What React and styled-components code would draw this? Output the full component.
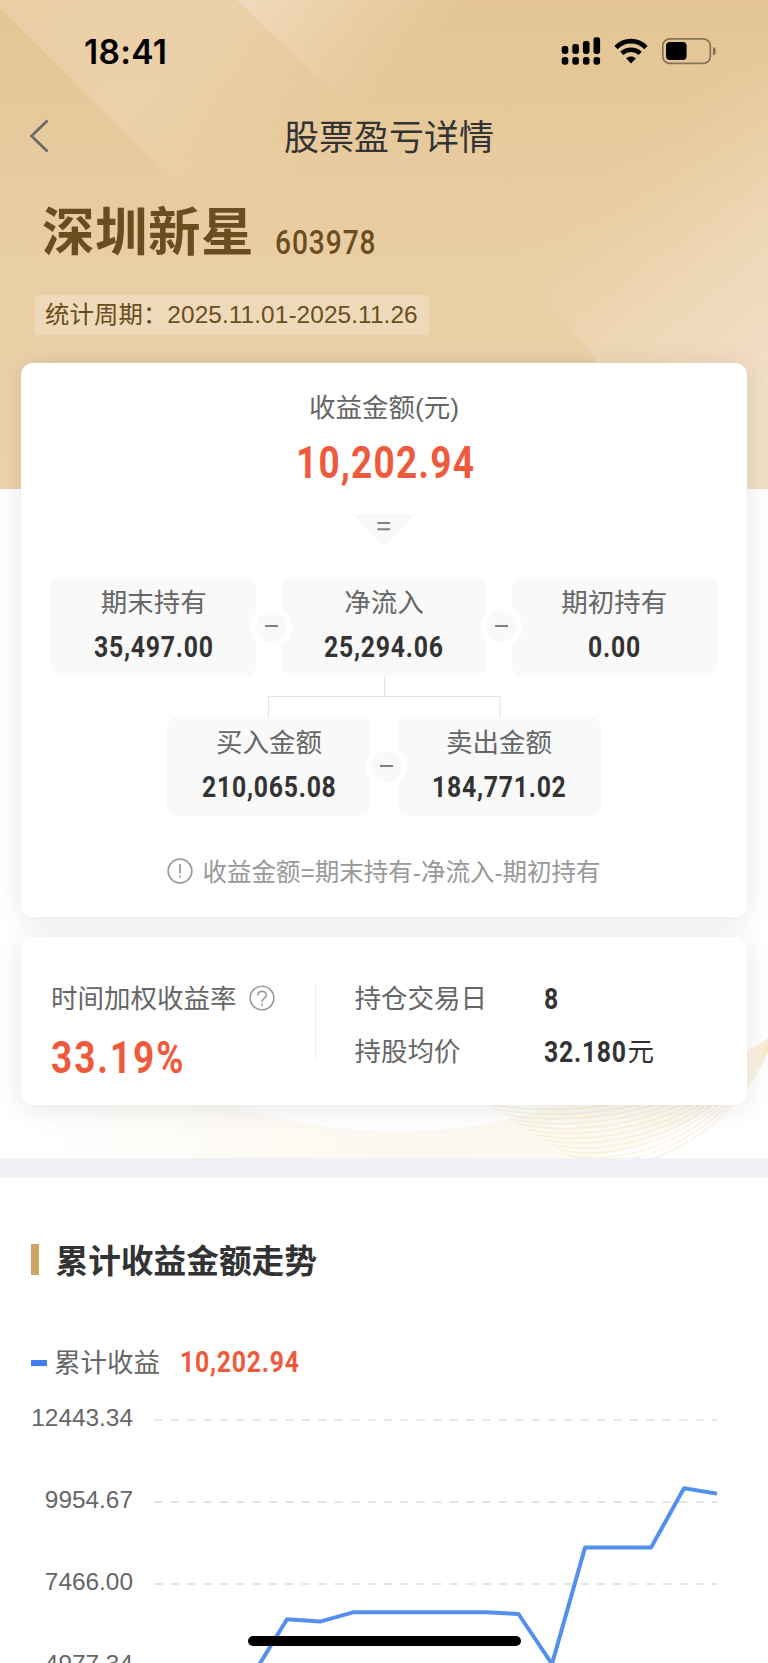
import React from 'react'
import styled, { createGlobalStyle } from 'styled-components'

const GlobalStyle = createGlobalStyle`
  html, body {
    margin: 0;
    padding: 0;
    background: #ffffff;
  }
  * {
    box-sizing: border-box;
  }
`;

const Page = styled.div`
  position: relative;
  width: 768px;
  height: 1663px;
  overflow: hidden;
  background: #ffffff;
  color: #666666;
  font-family: "Liberation Sans", "Noto Sans CJK SC", sans-serif;
`;

const Backdrop = styled.svg`
  position: absolute;
  top: 0;
  left: 0;
`;

const Overview = styled.div`
  position: relative;
  height: 1158px;
`;

const StatusBar = styled.div`
  height: 102px;
  padding: 0 51px 0 84px;
  display: flex;
  align-items: center;
  justify-content: space-between;
`;

const Clock = styled.div`
  padding-top: 1px;
  font-family: Inter, sans-serif;
  font-size: 33.5px;
  font-weight: 600;
  line-height: 40px;
  letter-spacing: 0.3px;
  color: #000000;
`;

const NavBar = styled.div`
  height: 68px;
  padding: 0 29px;
  display: grid;
  grid-template-columns: 20px 1fr 10px;
  align-items: center;
`;

const NavTitle = styled.div`
  padding-top: 2px;
  text-align: center;
  font-size: 35px;
  line-height: 61px;
  color: #333333;
`;

const StockRow = styled.div`
  height: 125px;
  padding: 35px 0 0 42px;
  display: flex;
  align-items: flex-start;
  gap: 21px;
  color: #6b4d20;
`;

const StockName = styled.div`
  font-size: 52.5px;
  font-weight: 700;
  line-height: 56px;
  letter-spacing: 0.5px;
`;

/* narrow figures, width is the laid out width after the squeeze */
const Num = styled.span`
  display: block;
  width: ${({ $width }) => $width}px;
  margin-top: ${({ $top }) => $top || 0}px;
  font-family: Roboto, sans-serif;
  font-size: ${({ $size }) => $size || 29.5}px;
  font-weight: ${({ $weight }) => $weight || 700};
  line-height: ${({ $line }) => $line || 36}px;
  letter-spacing: ${({ $spacing }) => $spacing || 0.9}px;
  color: ${({ $color }) => $color || "#333333"};
  white-space: nowrap;
  transform: scaleX(${({ $squeeze }) => $squeeze || 0.84});
  transform-origin: left center;
`;

const Period = styled.div`
  width: 393.5px;
  height: 40px;
  margin-left: 35px;
  padding-left: 10px;
  border-radius: 4px;
  background: #eedabb;
  color: #6b4d20;
  font-size: 24.4px;
  line-height: 40px;
  letter-spacing: 0.08px;
  white-space: nowrap;
`;

const Card = styled.div`
  width: 726px;
  margin: 0 auto;
  border-radius: 12px;
  background: #ffffff;
  box-shadow: 0 3px 28px rgba(0, 0, 0, 0.1);
`;

const ProfitCard = styled(Card)`
  height: 554px;
  margin-top: 28px;
  padding-top: 27px;
  display: flex;
  flex-direction: column;
  align-items: center;
`;

const Label = styled.div`
  padding-top: 2.6px;
  font-size: ${({ $size }) => $size || 26.5}px;
  line-height: 31.4px;
  color: ${({ $color }) => $color || "#666666"};
  white-space: nowrap;
`;

const Pointer = styled.svg`
  display: block;
  margin-top: 27px;
`;

const BoxRow = styled.div`
  margin-top: ${({ $top }) => $top || 0}px;
  display: flex;
  align-items: center;
`;

const Box = styled.div`
  width: 204.7px;
  height: 99px;
  padding-top: 9px;
  border-radius: 11px;
  background: #f9f9f9;
  display: flex;
  flex-direction: column;
  align-items: center;
`;

const Minus = styled.div`
  position: relative;
  z-index: 1;
  width: 41px;
  height: 41px;
  margin: 0 -10.2px 0 -5.3px;
  border: 5px solid #ffffff;
  border-radius: 50%;
  background: #f9f9f9;
  display: flex;
  align-items: center;
  justify-content: center;

  &::after {
    content: "";
    width: 13px;
    height: 2px;
    background: #808080;
  }
`;

const Branch = styled.svg`
  display: block;
`;

const Hint = styled.div`
  margin-top: 38.5px;
  display: flex;
  align-items: center;
  gap: 9px;
`;

const RateCard = styled(Card)`
  height: 168px;
  margin-top: 20px;
  display: flex;
`;

const Rate = styled.div`
  width: 294px;
  padding: 44px 0 0 30px;
`;

const RateLabel = styled.div`
  display: flex;
  align-items: center;
  gap: 12px;
`;

const Divider = styled.div`
  width: 1px;
  height: 76px;
  margin-top: 46px;
  background: #eeeeee;
`;

const Facts = styled.div`
  padding: 44px 0 0 38.5px;
`;

const Fact = styled.div`
  height: 53px;
  display: grid;
  grid-template-columns: 189.5px 1fr;
  align-items: start;
`;

const FactValue = styled.div`
  display: flex;
`;

const Band = styled.div`
  height: 20px;
  background: #f0f0f5;
`;

const Trend = styled.div`
  position: relative;
  height: 485px;
  padding-left: 31px;
`;

const TrendTitle = styled.div`
  height: 165px;
  padding-top: 64px;
  display: flex;
  align-items: flex-start;
  gap: 16.5px;
  color: #333333;
  font-size: 32.7px;
  font-weight: 700;
  line-height: 40px;

  &::before {
    content: "";
    width: 8px;
    height: 31px;
    margin-top: 2px;
    background: #cca561;
  }
`;

const Legend = styled.div`
  height: 60px;
  display: flex;
  align-items: flex-start;

  &::before {
    content: "";
    width: 16px;
    height: 6.5px;
    margin: 16.5px 7px 0 0;
    background: #3d7ef0;
  }
`;

const LegendName = styled(Label)`
  width: 126px;
  padding-top: 4.6px;
`;

const Chart = styled.div`
  display: flex;
  gap: 21px;
`;

const Axis = styled.div`
  width: 102px;
  text-align: right;
  font-size: 24.4px;
  line-height: 82px;
  margin-top: -26px;
  color: #666666;
`;

const Plot = styled.svg`
  display: block;
`;

const HomeBar = styled.div`
  position: absolute;
  left: 248px;
  bottom: 17px;
  width: 273px;
  height: 10px;
  border-radius: 5px;
  background: #000000;
`;

const STEPS = Array.from({ length: 15 }, (_, i) => i);

function HeaderArt() {
  return (
    <Backdrop width="768" height="1158" viewBox="0 0 768 1158">
      <defs>
        <linearGradient id="gold" x1="0" y1="0" x2="0" y2="1">
          <stop offset="0" stopColor="#e4c593" />
          <stop offset="0.5" stopColor="#e9cda3" />
          <stop offset="1" stopColor="#edd4ad" />
        </linearGradient>
        <linearGradient id="facetA" gradientUnits="userSpaceOnUse" x1="0" y1="8" x2="240" y2="240">
          <stop offset="0" stopColor="#ecd0aa" stopOpacity="0.8" />
          <stop offset="0.5" stopColor="#ecd2ae" stopOpacity="0.8" />
          <stop offset="1" stopColor="#eccfa8" stopOpacity="0" />
        </linearGradient>
        <linearGradient id="facetB" gradientUnits="userSpaceOnUse" x1="240" y1="0" x2="360" y2="115">
          <stop offset="0" stopColor="#f1dcc0" stopOpacity="0.85" />
          <stop offset="1" stopColor="#eccfa8" stopOpacity="0" />
        </linearGradient>
        <linearGradient id="facetC" gradientUnits="userSpaceOnUse" x1="768" y1="380" x2="590" y2="180">
          <stop offset="0" stopColor="#f1dfc6" />
          <stop offset="0.5" stopColor="#efd9ba" stopOpacity="0.75" />
          <stop offset="1" stopColor="#eccfa8" stopOpacity="0" />
        </linearGradient>
        <linearGradient id="wave" gradientUnits="userSpaceOnUse" x1="20" y1="0" x2="700" y2="0">
          <stop offset="0" stopColor="#fdf8ee" stopOpacity="0" />
          <stop offset="0.55" stopColor="#fcf8f0" />
          <stop offset="1" stopColor="#fdfaf3" />
        </linearGradient>
      </defs>
      <rect width="768" height="489" fill="url(#gold)" />
      <path d="M0 0H700V400H395L0 8Z" fill="url(#facetA)" />
      <path d="M237 0H600V335L335 95Z" fill="url(#facetB)" />
      <path d="M768 60H360L600 366L696 489H768Z" fill="url(#facetC)" />
      <path d="M20 1090H200C300 1140 460 1146 570 1100H720C700 1120 640 1150 590 1158H20Z" fill="url(#wave)" />
      {STEPS.map((i) => (
        <path
          key={i}
          d={`M${470 + i * 8} ${1094 + i * 5}C${560 + i * 4} ${1108 + i * 5} ${680 + i * 3} ${1098 + i * 4} 769 ${1038 + i * 0.8}`}
          fill="none"
          stroke="#f3d9a6"
          strokeOpacity="0.38"
          strokeWidth="1.2"
        />
      ))}
    </Backdrop>
  )
}

function StatusIcons() {
  return (
    <svg width="156" height="32" viewBox="561 35 156 32">
      {[0, 1, 2, 3].map((i) => (
        <g key={i}>
          <rect x={561.7 + i * 10.6} y={[46, 44, 41, 37.3][i]} width="6.6" height={[8, 10, 13, 16.7][i]} rx="2.4" />
          <rect x={561.7 + i * 10.6} y="57" width="6.6" height="7.8" rx="2.8" />
        </g>
      ))}
      <g fill="none" stroke="#000000" strokeWidth="4.6">
        <path d="M616 47.6C624.5 39 637.5 39 646 47.6" />
        <path d="M621.8 53.4C627 48.6 635 48.6 640.2 53.4" />
      </g>
      <path d="M631 63.5L626.2 58.4C629 55.8 633 55.8 635.8 58.4Z" />
      <rect x="662.8" y="38.8" width="47.5" height="24.6" rx="7" fill="none" stroke="#000000" strokeOpacity="0.42" strokeWidth="1.7" />
      <rect x="666" y="42" width="20.6" height="18" rx="4" />
      <path d="M713 47C716.6 48 716.6 54.5 713 55.5Z" fillOpacity="0.45" />
    </svg>
  )
}

function Amount({ label, value, width }) {
  return (
    <Box>
      <Label>{label}</Label>
      <Num $top={9.5} $width={width}>{value}</Num>
    </Box>
  )
}

function App() {
  return (
    <Page>
      <GlobalStyle />
      <Overview>
        <HeaderArt />
        <Overview as="main">
          <StatusBar>
            <Clock>18:41</Clock>
            <StatusIcons />
          </StatusBar>
          <NavBar>
            <svg width="20" height="34" viewBox="0 0 20 34" fill="none" stroke="#666666" strokeWidth="2.6">
              <path d="M18.5 1.5L2.5 17L18.5 32.5" />
            </svg>
            <NavTitle>股票盈亏详情</NavTitle>
          </NavBar>
          <StockRow>
            <StockName>深圳新星</StockName>
            <Num $top={20} $width={103} $size={33.5} $weight={500} $spacing={1.1} $color="#6b4d20">603978</Num>
          </StockRow>
          <Period>统计周期：2025.11.01-2025.11.26</Period>

          <ProfitCard>
            <Label>收益金额(元)</Label>
            <Num $top={14.5} $width={177} $size={45} $line={48} $squeeze={0.82} $spacing={1.5} $color="#f05a3c">10,202.94</Num>
            <Pointer width="64" height="32" viewBox="0 0 64 32">
              <path d="M0 0H64L32 32Z" fill="#f9f9f9" />
              <path d="M25.5 9H38M25.5 15.2H38" stroke="#808080" strokeWidth="2" />
            </Pointer>
            <BoxRow $top={31}>
              <Amount label="期末持有" value="35,497.00" width={119.5} />
              <Minus />
              <Amount label="净流入" value="25,294.06" width={119.5} />
              <Minus />
              <Amount label="期初持有" value="0.00" width={53} />
            </BoxRow>
            <Branch width="234" height="41" viewBox="0 0 234 41">
              <path d="M117.5 0V20M1.5 41V20.5H233V41" fill="none" stroke="#e4e4e4" strokeWidth="1.2" />
            </Branch>
            <BoxRow>
              <Amount label="买入金额" value="210,065.08" width={134.5} />
              <Minus />
              <Amount label="卖出金额" value="184,771.02" width={134.5} />
            </BoxRow>
            <Hint>
              <svg width="26" height="26" viewBox="0 0 26 26" fill="none" stroke="#999999" strokeWidth="1.7">
                <circle cx="13" cy="13" r="11.8" />
                <path d="M13 6V15.5M13 17.6V19.6" />
              </svg>
              <Label $size={24.5} $color="#999999">收益金额=期末持有-净流入-期初持有</Label>
            </Hint>
          </ProfitCard>

          <RateCard>
            <Rate>
              <RateLabel>
                <Label>时间加权收益率</Label>
                <svg width="26" height="26" viewBox="0 0 26 26" fill="none" stroke="#999999" strokeWidth="1.6">
                  <circle cx="13" cy="13" r="11.8" />
                  <path d="M8.8 10.6C8.8 4.9 17.4 5.2 17.4 10.2C17.4 13.2 13.1 13.2 13.1 16.9M13.1 18.6V20.8" />
                </svg>
              </RateLabel>
              <Num $top={19} $width={132} $size={45} $line={48} $squeeze={0.82} $spacing={2.4} $color="#f05a3c">33.19%</Num>
            </Rate>
            <Divider />
            <Facts>
              <Fact>
                <Label>持仓交易日</Label>
                <FactValue><Num $width={15}>8</Num></FactValue>
              </Fact>
              <Fact>
                <Label>持股均价</Label>
                <FactValue><Num $width={83.5}>32.180</Num><Label $color="#333333">元</Label></FactValue>
              </Fact>
            </Facts>
          </RateCard>
        </Overview>
      </Overview>
      <Band />
      <Trend>
        <TrendTitle>累计收益金额走势</TrendTitle>
        <Legend>
          <LegendName>累计收益</LegendName>
          <Num $top={1} $width={118} $color="#f05a3c">10,202.94</Num>
        </Legend>
        <Chart>
          <Axis>
            <div>12443.34</div>
            <div>9954.67</div>
            <div>7466.00</div>
            <div>4977.34</div>
          </Axis>
          <Plot width="566" height="260" viewBox="154 1403 566 260">
            <g stroke="#e4e4e4" strokeWidth="1.8" strokeDasharray="8.2 8.2">
              <path d="M154.3 1419.8H717.3" />
              <path d="M154.3 1502H717.3" />
              <path d="M154.3 1584H717.3" />
            </g>
            <path
              d="M259 1665L287 1619.3L320 1621.6L353 1612.3H486L518.5 1614L552 1664L585 1547.6H651L684 1488.3L717 1493.6"
              fill="none"
              stroke="#558fee"
              strokeWidth="4"
              strokeLinejoin="round"
            />
          </Plot>
        </Chart>
      </Trend>
      <HomeBar />
    </Page>
  )
}

export default App
